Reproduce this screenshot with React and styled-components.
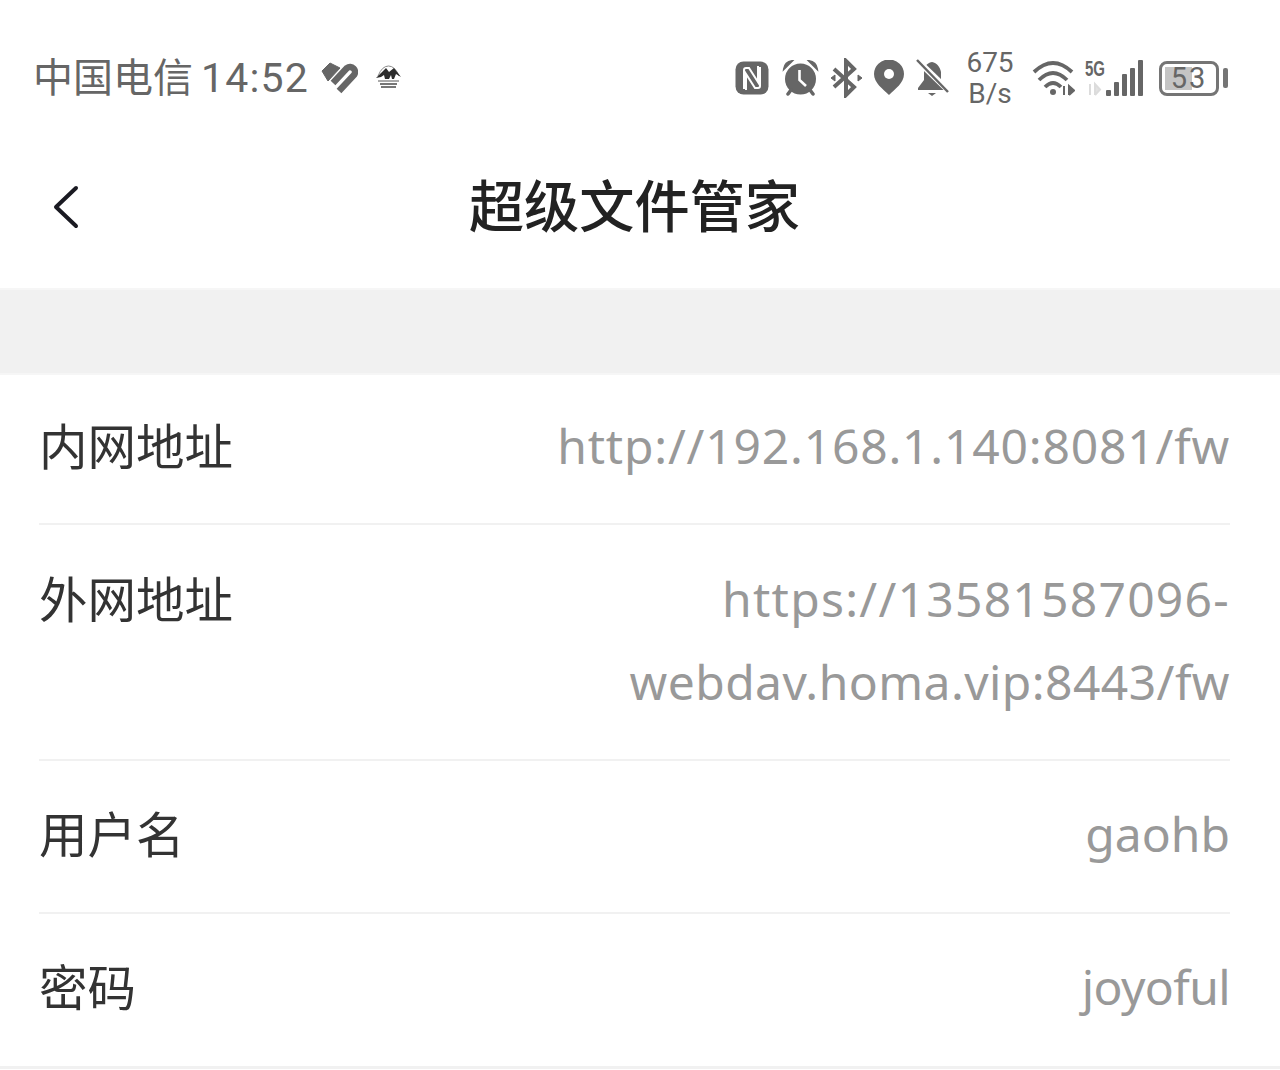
import React from 'react'
import styled, { createGlobalStyle } from 'styled-components'

const GlobalStyle = createGlobalStyle`
  html, body {
    margin: 0;
    padding: 0;
    background: #fff;
  }
  body {
    font-family: 'Noto Sans', 'Noto Sans CJK SC', sans-serif;
  }
`

const Page = styled.div`
  width: 1280px;
  height: 1070px;
  overflow: hidden;
  background: #fff;
`

const StatusBar = styled.div`
  height: 136px;
  box-sizing: border-box;
  padding: 20px 52px 0 33px;
  display: flex;
  align-items: center;
  justify-content: space-between;
  color: #666;
`

const StatusGroup = styled.div`
  display: flex;
  align-items: center;
`

const Carrier = styled.span`
  font-family: 'Noto Sans CJK SC', sans-serif;
  font-size: 40px;
  line-height: 50px;
  padding-bottom: 6px;
  white-space: nowrap;
`

const Clock = styled.span`
  font-family: Roboto, sans-serif;
  font-size: 41px;
  line-height: 50px;
  letter-spacing: 1.2px;
  margin-left: 8px;
`

const Speed = styled.div`
  width: 48px;
  margin: 0 18px 0 17px;
  font-family: Roboto, sans-serif;
  font-size: 28px;
  line-height: 31px;
  text-align: center;
  white-space: nowrap;
`

const Icon = styled.svg`
  display: block;
  flex: none;
  margin-left: ${p => p.$ml || 0}px;
`

const Battery = styled.div`
  position: relative;
  width: 60px;
  height: 35px;
  margin-left: 16px;
  box-sizing: border-box;
  border: 3px solid #757575;
  border-radius: 8px;
  display: flex;
  align-items: center;
  justify-content: center;
  font-family: Roboto, sans-serif;
  font-size: 29px;
  line-height: 29px;
  color: #666;
  &::before {
    content: '';
    position: absolute;
    left: 3px;
    top: 3px;
    bottom: 3px;
    width: 27px;
    background: #c4c4c4;
  }
`

const BatteryValue = styled.span`
  position: relative;
  letter-spacing: 2px;
`

const BatteryCap = styled.div`
  width: 5px;
  height: 20px;
  margin-left: 4px;
  background: #757575;
  border-radius: 2px;
`

const Header = styled.div`
  position: relative;
  height: 152px;
  display: flex;
  align-items: center;
  justify-content: center;
  padding-bottom: 18px;
  box-sizing: border-box;
`

const BackButton = styled.button`
  position: absolute;
  left: 52px;
  top: 49px;
  padding: 0;
  border: 0;
  background: none;
`

const Title = styled.h1`
  margin: 0 0 0 -11px;
  font-family: 'Noto Sans CJK SC', sans-serif;
  font-size: 55.2px;
  line-height: 70px;
  font-weight: 500;
  color: #222;
`

const Band = styled.div`
  height: 87px;
  box-sizing: border-box;
  background: #f1f1f1;
  border-top: 2px solid #f6f6f6;
  border-bottom: 2px solid #f6f6f6;
`

const List = styled.div`
  padding: 0 50px 0 39px;
  border-bottom: 3px solid #f1f1f1;
`

const Row = styled.div`
  display: flex;
  justify-content: space-between;
  box-sizing: border-box;
  height: ${p => p.$height}px;
  padding-top: ${p => p.$top}px;
  border-bottom: ${p => (p.$last ? 0 : '2px solid #f1f1f1')};
`

const Label = styled.div`
  font-family: 'Noto Sans CJK SC', sans-serif;
  font-size: 48.5px;
  line-height: 81px;
  color: #333;
  white-space: nowrap;
`

const Value = styled.div`
  width: 760px;
  font-family: 'Noto Sans', sans-serif;
  font-size: 48px;
  line-height: 83px;
  color: #999;
  text-align: right;
`

const ValueLine = styled.div`
  letter-spacing: ${p => p.$tracking || 0}px;
`

const rows = [
  { label: '内网地址', lines: [{ text: 'http://192.168.1.140:8081/fw', tracking: 0.8 }], height: 150, top: 29 },
  {
    label: '外网地址',
    lines: [
      { text: 'https://13581587096-', tracking: 1.25 },
      { text: 'webdav.homa.vip:8443/fw', tracking: 0.43 }
    ],
    height: 236,
    top: 32
  },
  { label: '用户名', lines: [{ text: 'gaohb' }], height: 153, top: 31 },
  { label: '密码', lines: [{ text: 'joyoful', tracking: -0.6 }], height: 152, top: 31, last: true }
]

const App = () => {
  return (
    <Page>
      <GlobalStyle />
      <StatusBar>
        <StatusGroup>
          <Carrier>中国电信</Carrier>
          <Clock>14:52</Clock>
          <Icon $ml={11} width="38" height="34" viewBox="0 0 38 34" fill="none">
            <path d="M2 10 L10 2 L20 7 L8 20 Z" fill="#666" stroke="#666" strokeWidth="1" strokeLinejoin="round" />
            <path d="M13 22 L27 7 A5 5 0 0 1 34 14 L19 30" stroke="#666" strokeWidth="6.5" />
          </Icon>
          <Icon $ml={17} width="27" height="26" viewBox="0 0 27 26" fill="none">
            <path d="M3 11 Q7 1 13.5 1 Q20 1 24 11" stroke="#8a8a8a" strokeWidth="1" />
            <path d="M1 13 L6 8 L11 3 L14 7 L19 3 L26 12 L21 9 L19 14 H17 L16 10 L14 14 H10 L9 10 L6 12 Z" fill="#2c2c2c" />
            <path d="M3 16 H24" stroke="#aaa" strokeWidth="2" />
            <path d="M5 19 H22 M6 22 H21" stroke="#777" strokeWidth="2" />
          </Icon>
        </StatusGroup>
        <StatusGroup>
          <Icon width="34" height="34" viewBox="0 0 34 34">
            <rect x="0.5" y="0.5" width="33" height="33" rx="8" fill="#666" />
            <path d="M9 28 V9 Q9 7 11 7 H14 L23 21 V5 M25 6 V25 Q25 27 23 27 H20 L11 13 V29" fill="none" stroke="#fff" strokeWidth="2" />
          </Icon>
          <Icon $ml={13} width="37" height="36" viewBox="0 0 37 36">
            <circle cx="18.5" cy="19" r="15.5" fill="#666" />
            <path d="M2 9 Q3 2 10 1 Z M35 9 Q34 2 27 1 Z" fill="#666" stroke="#666" strokeWidth="2" />
            <path d="M6 34 L9 30 M31 34 L28 30" stroke="#666" strokeWidth="3.5" strokeLinecap="round" />
            <path d="M17.5 10 V20 L24 26" fill="none" stroke="#fff" strokeWidth="2.6" />
          </Icon>
          <Icon $ml={12} width="31" height="40" viewBox="0 0 31 40" fill="none" stroke="#666" strokeWidth="4">
            <path d="M3 11 L23 29 L15 37 V3 L23 11 L3 29" />
            <path d="M27 17 L31 20 L27 23 Z M4 17 L0 20 L4 23 Z" fill="#666" strokeWidth="1" />
          </Icon>
          <Icon $ml={12} width="30" height="36" viewBox="0 0 30 36">
            <path d="M15 35 C9 29 0 23 0 14 A15 14.5 0 0 1 30 14 C30 23 21 29 15 35 Z" fill="#666" />
            <circle cx="15" cy="14" r="5" fill="#fff" />
          </Icon>
          <Icon $ml={12} width="33" height="38" viewBox="0 0 33 38">
            <path d="M16 3 C10 4 8 9 8 14 V21 L2 29 V31 H28 V29 L25 25 V13 C24 8 21 4 16 3 Z" fill="#666" />
            <path d="M12 34 H20 L16 37 Z" fill="#666" />
            <path d="M2 2 L33 32" stroke="#fff" strokeWidth="6" />
            <path d="M1 1 L32 33" stroke="#666" strokeWidth="2.5" />
          </Icon>
          <Speed>675<br />B/s</Speed>
          <Icon width="43" height="36" viewBox="0 0 43 36" fill="none" stroke="#666" strokeWidth="3.8">
            <path d="M2 12 Q21 -6 40 12 M7 20 Q21 6 35 20 M13 27 Q21 19 29 27" />
            <circle cx="21" cy="32" r="3" fill="#666" stroke="none" />
            <path d="M32 26 V35 M37 35 V26 L42 30.5 L37 35" strokeWidth="2" fill="#666" />
          </Icon>
          <Icon $ml={10} width="58" height="50" viewBox="0 -6 58 50">
            <text x="0" y="17" fontFamily="Liberation Sans, sans-serif" fontWeight="700" fontSize="22" fill="#666" textLength="20" lengthAdjust="spacingAndGlyphs">5G</text>
            <path d="M5 25 V36 M10 36 V25 L15 30.5 L10 36" fill="#e2e2e2" stroke="#dcdcdc" strokeWidth="2" />
            <rect x="21" y="31" width="5" height="6" rx="1" fill="#666" />
            <rect x="29" y="23" width="5" height="14" rx="1" fill="#666" />
            <rect x="37" y="15" width="5" height="22" rx="1" fill="#666" />
            <rect x="45" y="9" width="5" height="28" rx="1" fill="#666" />
            <rect x="53" y="1" width="5" height="36" rx="1" fill="#666" />
          </Icon>
          <Battery><BatteryValue>53</BatteryValue></Battery>
          <BatteryCap />
        </StatusGroup>
      </StatusBar>
      <Header>
        <BackButton aria-label="back">
          <Icon width="28" height="44" viewBox="0 0 28 44" fill="none">
            <path d="M24 3 L4 22 L24 41" stroke="#1a1a22" strokeWidth="4" strokeLinecap="round" strokeLinejoin="round" />
          </Icon>
        </BackButton>
        <Title>超级文件管家</Title>
      </Header>
      <Band />
      <List>
        {rows.map(r => (
          <Row key={r.label} $height={r.height} $top={r.top} $last={r.last}>
            <Label>{r.label}</Label>
            <Value>
              {r.lines.map(l => (
                <ValueLine key={l.text} $tracking={l.tracking}>{l.text}</ValueLine>
              ))}
            </Value>
          </Row>
        ))}
      </List>
    </Page>
  )
}

export default App
